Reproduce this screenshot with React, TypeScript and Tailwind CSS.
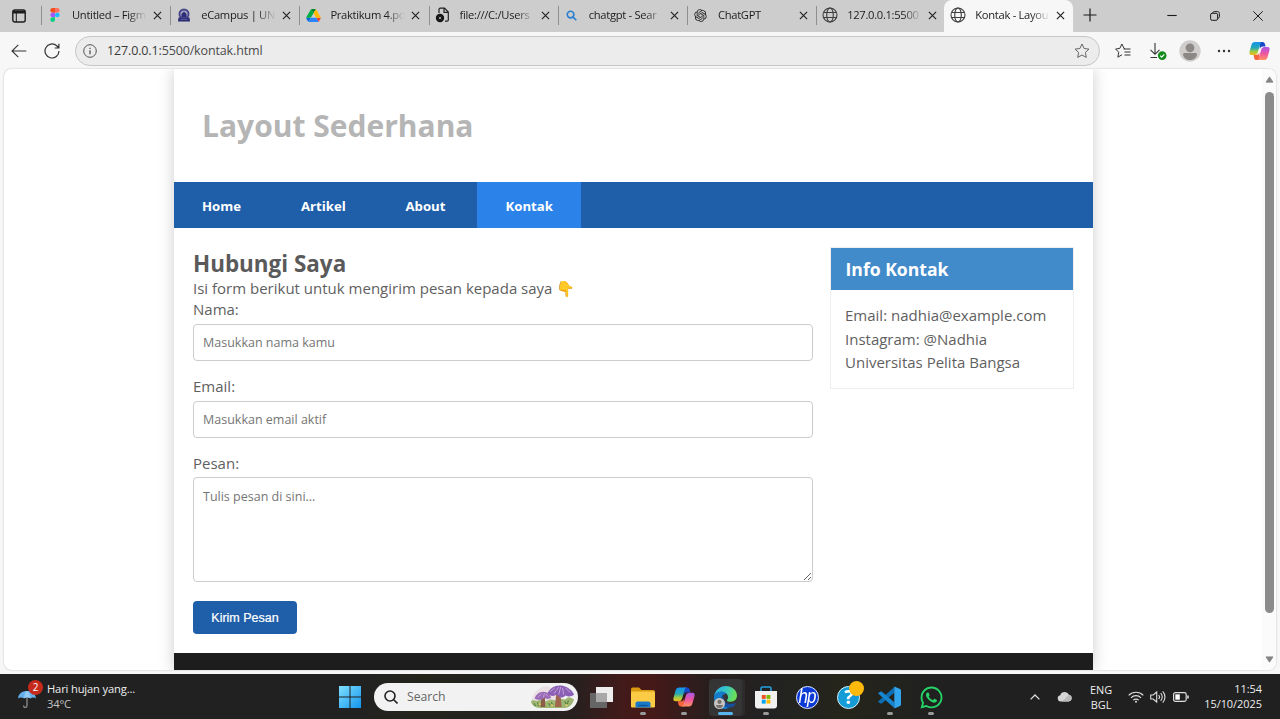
import React from "react";
import { FaWhatsapp } from "react-icons/fa";
import { RiOpenaiFill } from "react-icons/ri";

const sans = "font-['Open_Sans','Noto_Sans',sans-serif]";

function Globe({ className = "" }: { className?: string }) {
  return (
    <svg viewBox="0 0 16 16" className={`h-4 w-4 ${className}`} fill="none" stroke="#3f3f3f" strokeWidth="1.1">
      <circle cx="8" cy="8" r="7" />
      <ellipse cx="8" cy="8" rx="3.3" ry="7" />
      <path d="M1.6 5.5h12.8M1.6 10.5h12.8" />
    </svg>
  );
}

function FigmaIcon() {
  return (
    <svg viewBox="0 0 10 15" className="h-[14px] w-[10px]">
      <path d="M2.5 0H5v5H2.500a2.500 2.500 0 0 1 0-5z" fill="#f24e1e" />
      <path d="M5 0h2.500a2.500 2.500 0 0 1 0 5H5z" fill="#ff7262" />
      <path d="M2.500 5H5v5H2.500a2.500 2.500 0 0 1 0-5z" fill="#a259ff" />
      <circle cx="7.500" cy="7.500" r="2.500" fill="#1abcfe" />
      <path d="M2.500 10H5v2.500A2.500 2.500 0 1 1 2.500 10z" fill="#0acf83" />
    </svg>
  );
}

function CampusIcon() {
  return (
    <svg viewBox="0 0 14 14" className="h-[14px] w-[14px]">
      <circle cx="7" cy="6" r="5.500" fill="#45458a" />
      <circle cx="7" cy="6" r="3.600" fill="#aaa6c2" />
      <path d="M4.500 6 7 3.500 9.500 6V9h-5z" fill="#2d2d78" />
      <path d="M1.500 9.500h11l.5 4H1z" fill="#2b2b78" />
      <path d="M3.500 11.300h7" stroke="#8584b0" strokeWidth=".6" />
    </svg>
  );
}

function DriveIcon() {
  return (
    <svg viewBox="0 0 87.300 78" className="h-[13px] w-[15px]">
      <path d="m6.600 66.850 3.850 6.650c.8 1.400 1.950 2.500 3.300 3.300l13.750-23.800H0c0 1.550.4 3.100 1.200 4.500z" fill="#0066da" />
      <path d="M43.650 25 29.900 1.200c-1.350.8-2.500 1.900-3.300 3.300L1.200 48.500A9 9 0 0 0 0 53h27.500z" fill="#00ac47" />
      <path d="M73.550 76.800c1.350-.8 2.500-1.900 3.300-3.300l9.250-16c.8-1.400 1.200-2.950 1.200-4.500H59.800l5.850 11.500z" fill="#ea4335" />
      <path d="M43.650 25 57.400 1.200C56.050.4 54.500 0 52.900 0H34.400c-1.600 0-3.150.45-4.500 1.200z" fill="#00832d" />
      <path d="M59.800 53H27.500L13.750 76.800c1.350.8 2.900 1.200 4.500 1.200h50.800c1.600 0 3.150-.45 4.500-1.200z" fill="#2684fc" />
      <path d="m73.400 26.500-12.700-22c-.8-1.400-1.950-2.500-3.300-3.300L43.650 25 59.800 53h27.450c0-1.550-.4-3.100-1.200-4.500z" fill="#ffba00" />
    </svg>
  );
}

function FileIcon() {
  return (
    <svg viewBox="0 0 16 16" className="h-4 w-4" fill="none">
      <path d="M4 6V2.500A1.200 1.200 0 0 1 5.200 1.200H9.500l3.800 3.800V13a1.200 1.200 0 0 1-1.200 1.200H10M9 1.200V5.400h4.200" stroke="#222" strokeWidth="1.200" />
      <circle cx="5" cy="11" r="4.200" fill="#151515" />
      <path d="m3.800 9.800 2.400 2.400m0-2.400-2.400 2.400" stroke="#bbb" strokeWidth=".8" />
    </svg>
  );
}

function Close() {
  return (
    <svg viewBox="0 0 10 10" className="h-[9px] w-[9px] shrink-0" stroke="#222" strokeWidth="1.300">
      <path d="m1 1 8 8M9 1 1 9" />
    </svg>
  );
}

function Tab({ icon, title, active }: { icon: React.ReactNode; title: string; active?: boolean }) {
  return (
    <div className={`flex h-8 shrink-0 items-center pb-[2px] ${active ? "-ml-[1px] w-[129px] rounded-t-lg bg-[#f7f7f7]" : "w-[129.200px]"}`}>
      <span className={`h-[19px] w-px ${active ? "" : "bg-[#8f8f8f]"}`} />
      <span className="ml-[5px] flex w-4 shrink-0 justify-center">{icon}</span>
      <span className="ml-[9px] w-[76px] overflow-hidden whitespace-nowrap text-[11.200px] tracking-[-0.300px] text-[#1c1c1c] [mask-image:linear-gradient(to_right,black_74%,transparent_98%)]">
        {title}
      </span>
      <span className="ml-[5px] flex">
        <Close />
      </span>
    </div>
  );
}

function Copilot({ className }: { className: string }) {
  return (
    <svg viewBox="0 0 22 20" className={className}>
      <defs>
        <linearGradient id="cpL" x1="0" y1="0" x2="0" y2="1">
          <stop offset="0" stopColor="#1693ef" />
          <stop offset=".45" stopColor="#24a9b4" />
          <stop offset=".75" stopColor="#a9cd3b" />
          <stop offset="1" stopColor="#f4b91f" />
        </linearGradient>
        <linearGradient id="cpR" x1="0" y1="0" x2="0" y2="1">
          <stop offset="0" stopColor="#a957e9" />
          <stop offset=".5" stopColor="#ee55a1" />
          <stop offset="1" stopColor="#ff9360" />
        </linearGradient>
      </defs>
      <path d="M11 .5h3.200c1.300 0 2 .8 2.400 2l.8 2.700h-3.100c-1.700 0-2.500 1-3 2.600z" fill="#1748c9" />
      <path d="M6.300.5h7.200c-1 .3-1.500 1.200-1.900 2.500L9.300 11c-.5 2-1.500 3.300-3.600 3.300H2.600C.5 14.300 0 12.600.6 10.500l2-7C3.200 1.500 4.200.5 6.300.5z" fill="url(#cpL)" />
      <path d="M4.800 14.300h3c1.700 0 2.600-1 3-2.600l.2 7.800H7.900c-1.400 0-2-.8-2.400-2z" fill="#f4653d" />
      <path d="M15.700 19.500H8.500c1-.3 1.500-1.200 1.900-2.500l2.300-8c.5-2 1.500-3.300 3.600-3.300h3.100c2.100 0 2.600 1.700 2 3.800l-2 7c-.6 2-1.600 3-3.700 3z" fill="url(#cpR)" />
    </svg>
  );
}

function BrowserChrome() {
  return (
    <>
      <div className="flex h-8 items-center bg-[#cdcdcd]">
        <div className="flex w-[41px] shrink-0 justify-center pb-[1px] pr-[3px]">
          <svg viewBox="0 0 14 14" className="h-[14px] w-[14px]" fill="none" stroke="#1d1d1d" strokeWidth="1.400">
            <rect x=".8" y="1" width="12.400" height="12" rx="2" />
            <path d="M1 3.200h12" strokeWidth="2.600" />
            <path d="M4.300 4v9" strokeWidth="1" />
          </svg>
        </div>
        <Tab icon={<FigmaIcon />} title="Untitled – Figm" />
        <Tab icon={<CampusIcon />} title="eCampus | UNI" />
        <Tab icon={<DriveIcon />} title="Praktikum 4.pd" />
        <Tab icon={<FileIcon />} title="file:///C:/Users" />
        <Tab
          icon={
            <svg viewBox="0 0 12 12" className="h-[11px] w-[11px]" fill="none" stroke="#2a7fd0" strokeWidth="1.800">
              <circle cx="5" cy="5" r="3.600" />
              <path d="m7.500 7.500 3.700 3.700" />
            </svg>
          }
          title="chatgpt - Sear"
        />
        <Tab icon={<RiOpenaiFill className="h-[15px] w-[15px] text-[#222]" />} title="ChatGPT" />
        <Tab icon={<Globe />} title="127.0.0.1:5500" />
        <Tab icon={<Globe />} title="Kontak - Layou" active />
        <div className="flex flex-1 items-center text-[#1b1b1b]">
          <svg viewBox="0 0 14 14" className="ml-[10px] h-[14px] w-[14px] -translate-y-px" stroke="currentColor" strokeWidth="1.200">
            <path d="M7 .5v13M.5 7h13" />
          </svg>
          <svg viewBox="0 0 10 10" className="ml-[70px] h-[10px] w-[10px]" stroke="currentColor" strokeWidth="1.100">
            <path d="M.3 4.500h9.400" />
          </svg>
          <svg viewBox="0 0 10 10" className="ml-[33px] h-[10px] w-[10px]" stroke="currentColor" fill="none">
            <rect x=".6" y="2.300" width="7" height="7" rx="1.500" />
            <path d="M2.800 2.200C2.800 1 3.400.6 4.300.6h3.200c1.200 0 1.900.8 1.900 1.900v3.200c0 1-.5 1.500-1.600 1.500" />
          </svg>
          <svg viewBox="0 0 10 10" className="ml-[33px] h-[10px] w-[10px]" stroke="currentColor">
            <path d="m.3.3 9.400 9.400M9.700.3.300 9.700" />
          </svg>
        </div>
      </div>
      <div className="flex h-[37px] items-center bg-[#f7f7f7]">
        <svg viewBox="0 0 16 14" className="ml-[11px] h-[14px] w-4" fill="none" stroke="#333" strokeWidth="1.100">
          <path d="M15.300 7H1M7.300.8 1 7l6.300 6.200" />
        </svg>
        <svg viewBox="0 0 16 16" className="ml-[17px] h-4 w-4" fill="none" stroke="#333" strokeWidth="1.200">
          <path d="M15 8a7 7 0 1 1-2.300-5.200L14.800 5M14.900.8V5h-4.200" />
        </svg>
        <div className="ml-[15px] flex h-[30px] w-[1025px] items-center rounded-full border border-[#c6c6c6] bg-[#ececec] pl-[7px] pr-[9px]">
          <svg viewBox="0 0 14 14" className="h-[14px] w-[14px]" fill="none" stroke="#555">
            <circle cx="7" cy="7" r="6.300" />
            <path d="M7 6.300v4M7 3.700V5" strokeWidth="1.300" />
          </svg>
          <span className="ml-[10px] flex-1 pt-px text-[12.500px] tracking-[-0.140px] text-[#4a4a4a]">
            <span className="text-[#3a3a3a]">127.0.0.1</span>:5500/kontak.html
          </span>
          <svg viewBox="0 0 16 16" className="h-4 w-4" fill="none" stroke="#666" strokeLinejoin="round">
            <path d="m8 1 2.100 4.500 4.900.6-3.600 3.400.9 4.900L8 12l-4.300 2.400.9-4.900L1 6.100l4.900-.6z" />
          </svg>
        </div>
        <svg viewBox="0 0 16 16" className="ml-[15px] h-4 w-4" fill="none" stroke="#333" strokeLinejoin="round">
          <path d="M9.800 5.500 9 5.400 6.900 1 4.800 5.400.6 6l3.100 3.200-.8 5L7 11.700M8.500 6h7M9.500 9h6M9.500 12h6" />
        </svg>
        <svg viewBox="0 0 18 18" className="ml-[18px] h-[18px] w-[18px]" fill="none" stroke="#333" strokeWidth="1.100">
          <path d="M6 1v11M1.500 7.800 6 12.300l4.500-4.500M1.500 15.500h6.500" />
          <circle cx="13.200" cy="13.600" r="4.300" fill="#138a1c" stroke="none" />
          <path d="m11.200 13.600 1.500 1.500 2.600-2.800" stroke="#fff" />
        </svg>
        <svg viewBox="0 0 22 22" className="ml-[12px] h-[22px] w-[22px]">
          <circle cx="11" cy="11" r="10.700" fill="#d0cecd" />
          <circle cx="11" cy="7.800" r="4.400" fill="#8b8886" />
          <path d="M4 14.500c0-1 .8-1.500 1.600-1.500h10.800c.8 0 1.600.5 1.600 1.500C17.500 18 14.500 20 11 20s-6.500-2-7-5.500z" fill="#8b8886" />
        </svg>
        <svg viewBox="0 0 14 4" className="ml-[16px] h-1 w-[14px]" fill="#333">
          <circle cx="2" cy="2" r="1.200" />
          <circle cx="7" cy="2" r="1.200" />
          <circle cx="12" cy="2" r="1.200" />
        </svg>
        <Copilot className="ml-[18px] h-5 w-[21px]" />
      </div>
    </>
  );
}

function Field({ label, placeholder }: { label: string; placeholder: string }) {
  return (
    <div className="mb-[15px]">
      <label className="block h-[25px] leading-[20px]">{label}</label>
      <input
        placeholder={placeholder}
        className="block h-[37px] w-full rounded-[4px] border border-[#ccc] bg-white px-[9px] text-[12.500px] placeholder:text-[#757575]"
      />
    </div>
  );
}

function WebPage() {
  return (
    <div className="mx-1 flex h-[601px] overflow-hidden rounded-lg bg-white shadow-[0_0_2px_rgba(0,0,0,0.25)]">
      <div className="ml-[170px] flex w-[919px] shrink-0 flex-col bg-white text-[15px] text-[#5f5f5f] shadow-[0_0_15px_rgba(0,0,0,0.2)]">
        <header className="flex h-[113px] shrink-0 items-center pl-7">
          <h1 className="text-[30px] font-bold text-[#b5b5b5]">Layout Sederhana</h1>
        </header>
        <nav className="flex h-[46px] shrink-0 bg-[#1f5faa] text-[13.200px] font-bold leading-[48px] text-white">
          <a className="w-[99px] pl-7">Home</a>
          <a className="w-[104px] pl-7">Artikel</a>
          <a className="w-[100px] pl-[28.500px]">About</a>
          <a className="h-[46px] w-[104px] bg-[#2b83ea] pl-[28.500px]">Kontak</a>
        </nav>
        <div className="flex h-[425px] shrink-0 items-start pl-[19px] pt-[19px]">
          <main className="w-[620px]">
            <h2 className="h-[31px] text-[22.450px] font-bold leading-[33px] text-[#5a5a5a]">Hubungi Saya</h2>
            <p className="h-[21px] leading-[20px]">Isi form berikut untuk mengirim pesan kepada saya 👇</p>
            <Field label="Nama:" placeholder="Masukkan nama kamu" />
            <Field label="Email:" placeholder="Masukkan email aktif" />
            <label className="block h-[24px] leading-[20px]">Pesan:</label>
            <textarea
              placeholder="Tulis pesan di sini..."
              className="block h-[105px] w-full resize rounded-[4px] border border-[#ccc] bg-white px-[9px] py-[10px] text-[12.500px] leading-[18px] placeholder:text-[#757575]"
            />
            <button className="mt-[19px] block h-[33px] w-[104px] rounded-[4px] bg-[#1f5faa] pt-px font-['Liberation_Sans',sans-serif] text-[12.500px] text-white [-webkit-text-stroke:0.200px_white]">
              Kirim Pesan
            </button>
          </main>
          <aside className="ml-[17px] h-[142px] w-[244px] border border-[#eee]">
            <h3 className="h-[42px] bg-[#428bca] pl-[14.500px] text-[17.600px] font-bold leading-[43px] text-white">Info Kontak</h3>
            <div className="pl-[14px] pt-[14px] leading-[23.600px]">
              <p>Email: nadhia@example.com</p>
              <p>Instagram: @Nadhia</p>
              <p>Universitas Pelita Bangsa</p>
            </div>
          </aside>
        </div>
        <footer className="flex-1 bg-[#1d1d1d]" />
      </div>
      <div className="flex-1" />
      <div className="flex w-[14px] flex-col items-center bg-[#fbfbfb]">
        <svg viewBox="0 0 10 8" className="mt-[7px] h-[7px] w-[9px] shrink-0" fill="#858585" stroke="#858585" strokeLinejoin="round">
          <path d="M5 1 9 7H1z" />
        </svg>
        <div className="mt-[9px] h-[521px] w-[9px] shrink-0 rounded-full bg-[#8b8b8b]" />
        <svg viewBox="0 0 10 8" className="mt-[43px] h-[7px] w-[9px] shrink-0" fill="#858585" stroke="#858585" strokeLinejoin="round">
          <path d="M5 7 1 1h8z" />
        </svg>
      </div>
    </div>
  );
}

function TaskItem({ children, mark = "none" }: { children: React.ReactNode; mark?: "none" | "open" | "active" }) {
  return (
    <div className="flex w-[41.200px] shrink-0 flex-col items-center">
      <div className={`flex h-[37px] items-center justify-center ${mark === "active" ? "w-[33px] rounded-[4px] bg-[#353535] shadow-[3px_0_0_#2c2c2c]" : "w-[36px]"}`}>
        {children}
      </div>
      <span
        className={`-mt-[4px] h-[3px] rounded-full ${
          mark === "active" ? "w-[15px] bg-[#58b7ee]" : mark === "open" ? "w-[6px] bg-[#9a9a9a]" : "w-[6px]"
        }`}
      />
    </div>
  );
}

function Mushrooms() {
  return (
    <svg viewBox="0 0 46 26" className="h-[25px] w-[46px]">
      <path d="M1 16c2-8 8-13 15-14l13 5-4 14H5z" fill="#e9dfe4" />
      <path d="M0 18c3-3 5 1 8-1s6 3 10 0 6 2 10-1 6 2 9-1 5 0 8 1c-2 6-6 9-11 9H10C4 25 1 22 0 18z" fill="#9fb574" />
      <path d="M26.500 9h4l1.500 15h-7z" fill="#a0664d" />
      <path d="M11 13h3.500l.5 11h-5z" fill="#8d5c49" />
      <path d="M17 10C20 4 25 1 31 1.500S43 6 45 11c-2 2-6 3-9 1-3 3-7 3-9-1-3 2-7 2-10-1z" fill="#8b5fb5" />
      <path d="M4 15c1-4 5-7 9-7s7 3 8 6c-2 2-5 2-7 0-2 3-7 3-10 1z" fill="#9a69b5" />
      <path d="m20 8 5-4m-1 6 5-7m0 8 2-8m3 8-1-7m8 5-5-5M7 14l4-4m2 4 1-4m4 3-3-3" stroke="#d3b4e4" strokeWidth=".8" />
      <path d="m3 20 2 3m2-4 1 4m10-4 2 4m1-4 2 3m12-4 2 3m2-4-1 4" stroke="#58833f" strokeWidth="1.200" />
      <path d="M8 21h2m11 1h2m13 0h2m-20-3h1" stroke="#f0cf65" strokeWidth="1.500" />
    </svg>
  );
}

function Taskbar() {
  return (
    <div className="mt-1 flex h-[45px] items-center bg-[linear-gradient(to_right,#212121_0,#212121_28%,#25241b_33%,#222220_40%,#28201f_45%,#441a19_49%,#451918_51%,#2a1e1d_55%,#222_60%,#25251b_66%,#202020_73%)] text-[#eee]">
      <div className="ml-[17px] flex w-[319px] shrink-0 items-center">
        <div className="relative -mt-[3px] h-[30px] w-[26px]">
          <svg viewBox="0 0 20 20" className="mt-[9px] h-[20px] w-[20px]" fill="none">
            <path d="M10 9v7.500c0 2.500-3.500 2.500-3.500 0" stroke="#8e8e8e" strokeWidth="1.300" />
            <path d="M1 9.500C1.500 4.500 5 2 10 2s8.500 2.500 9 7.500c-1.500-1.200-4-1.200-5.500 0-1.500-1.200-5-1.200-6.500 0-1.500-1.200-4.500-1.200-6 0z" fill="#65afeb" />
            <path d="M7 9.500C7.500 5 8.500 2.500 10 2c2 .5 3 3 3.500 7.500-1.500-1.200-5-1.200-6.500 0z" fill="#94ccf6" />
          </svg>
          <span className="absolute left-[11px] top-0 flex h-[15px] w-[15px] items-center justify-center rounded-full bg-[#c42b1c] text-[10px] text-white">
            2
          </span>
        </div>
        <div className="-mt-[2px] ml-[4px] text-[11.200px] leading-[15px] tracking-[-0.160px]">
          <div>Hari hujan yang...</div>
          <div className="text-[#c4c4c4]">34°C</div>
        </div>
      </div>
      <svg viewBox="0 0 22 22" className="ml-[3px] h-[22px] w-[22px] shrink-0">
        <defs>
          <linearGradient id="win" x1="0" y1="0" x2="1" y2="1">
            <stop offset="0" stopColor="#7fe0ff" />
            <stop offset="1" stopColor="#1495ee" />
          </linearGradient>
        </defs>
        <path d="M0 0h10.500v10.500H0zM11.500 0H22v10.500H11.500zM0 11.500h10.500V22H0zM11.500 11.500H22V22H11.500z" fill="url(#win)" />
      </svg>
      <div className="ml-[13px] flex h-[28px] w-[204px] shrink-0 items-center rounded-full bg-[#f2f2f2] pl-[10px] pr-[2px]">
        <svg viewBox="0 0 14 14" className="h-[14px] w-[14px]" fill="none" stroke="#222" strokeWidth="1.600">
          <circle cx="6" cy="6" r="5" />
          <path d="m9.700 9.700 3.800 3.800" />
        </svg>
        <span className="ml-[9px] flex-1 pt-px text-[12.200px] text-[#666]">Search</span>
        <Mushrooms />
      </div>
      <div className="ml-[3px] flex">
        <TaskItem>
          <svg viewBox="0 0 23 21" className="h-[21px] w-[23px]">
            <rect x="6" y="0" width="17" height="15" fill="#ededed" />
            <rect x="0" y="6" width="17" height="15" fill="#666" />
            <rect x="6" y="6" width="11" height="9" fill="#a8a8a8" />
          </svg>
        </TaskItem>
        <TaskItem mark="open">
          <svg viewBox="0 0 24 21" className="h-[21px] w-[24px]">
            <path d="M0 2a1.500 1.500 0 0 1 1.500-1.500H8L10.500 3H22a2 2 0 0 1 2 2v5H0z" fill="#d99a12" />
            <rect x="0" y="4.500" width="24" height="16" rx="1.200" fill="#fccb46" />
            <path d="M4.500 20.500v-4a2 2 0 0 1 2-2h11a2 2 0 0 1 2 2v4z" fill="#1879c9" />
            <path d="M7.500 18.500h9" stroke="#0b559c" strokeWidth="1.300" />
          </svg>
        </TaskItem>
        <TaskItem mark="open">
          <Copilot className="h-[20px] w-[22px]" />
        </TaskItem>
        <TaskItem mark="active">
          <div className="relative h-[23px] w-[23px]">
            <svg viewBox="0 0 24 24" className="h-[23px] w-[23px]">
              <defs>
                <linearGradient id="edgeA" x1="0" y1="0" x2="1" y2=".25">
                  <stop offset="0" stopColor="#2aa9e8" />
                  <stop offset=".55" stopColor="#36c7c6" />
                  <stop offset="1" stopColor="#6ade58" />
                </linearGradient>
              </defs>
              <path d="M0 11C1 4.500 6 0 12.300 0 19 0 24 4.700 24 10c0 4-3 6.500-6.500 6.500-2.500 0-4-.8-4-1.500 0-.5 1.200-1.200 1.200-3.200C14.700 8.500 11.500 6 8 6c-4 0-7 2.500-8 5z" fill="url(#edgeA)" />
              <path d="M0 11c1-3 4-5 8-5 2 0 4 .8 5.200 2C9.500 8 7.500 10.500 7.500 14c0 5 4 8.500 9 8.300-1.300.8-2.900 1.700-5 1.700C5 24 0 18.500 0 12z" fill="#127dcd" />
              <path d="M9.500 9.800C8.300 11 7.500 12.500 7.500 14.500c0 4.500 3.500 8 8.500 8 3 0 5.500-1.700 6.700-4.200.2-.5-.2-.8-.6-.6-5 2.500-10.600.6-11.600-3.200-.5-1.700-.5-3.200-1-4.700z" fill="#164f9f" />
            </svg>
            <svg viewBox="0 0 12 12" className="absolute bottom-0 left-0 h-[11px] w-[11px]">
              <circle cx="6" cy="6" r="6" fill="#c9c5c2" />
              <circle cx="6" cy="4.300" r="2.300" fill="#77716d" />
              <path d="M2.200 7.500h7.600c0 2-1.700 3.500-3.800 3.500S2.200 9.500 2.200 7.500z" fill="#77716d" />
            </svg>
          </div>
        </TaskItem>
        <TaskItem mark="open">
          <svg viewBox="0 0 22 23" className="h-[23px] w-[22px]">
            <path d="M6 6V2.500A1.500 1.500 0 0 1 7.500 1h7A1.500 1.500 0 0 1 16 2.500V6" fill="none" stroke="#22a2e4" strokeWidth="1.500" />
            <path d="M0 5h22v14.500a3 3 0 0 1-3 3H3a3 3 0 0 1-3-3z" fill="#f1f1f1" />
            <path d="M6.800 9h3.900v3.900H6.800z" fill="#f25022" />
            <path d="M11.500 9h3.900v3.900h-3.900z" fill="#7fba00" />
            <path d="M6.800 13.700h3.900v3.900H6.800z" fill="#00a4ef" />
            <path d="M11.500 13.700h3.900v3.900h-3.900z" fill="#ffb900" />
          </svg>
        </TaskItem>
        <TaskItem>
          <span className="flex h-[23px] w-[23px] items-center justify-center rounded-full border border-[#e4eaff] bg-[#0b39d5] pb-[3px] font-['Liberation_Sans',sans-serif] text-white">
            <span className="scale-x-[0.850] text-[20px] italic leading-none tracking-[-1px]">hp</span>
          </span>
        </TaskItem>
        <TaskItem>
          <span className="relative flex h-[23px] w-[23px] items-center justify-center rounded-full border-[1.500px] border-[#dbf2fc] bg-[#159bd5] text-[19px] font-bold leading-none text-white">
            ?
            <span className="absolute -right-[5px] -top-[6px] h-[15px] w-[15px] rounded-full bg-[#ffb90b]" />
          </span>
        </TaskItem>
        <TaskItem mark="open">
          <svg viewBox="0 0 24 24" className="h-[23px] w-[23px]">
            <path d="M17 1v6L3.500 18.500.9 17.200a1 1 0 0 1-.2-1.600z" fill="#0c6fb5" />
            <path d="M17 23v-6L3.500 5.500.9 6.800a1 1 0 0 0-.2 1.600z" fill="#1786d0" />
            <path d="M17 .5 23 3.200a1.500 1.500 0 0 1 1 1.300v15a1.500 1.500 0 0 1-1 1.300l-6 2.700z" fill="#31a5ee" />
          </svg>
        </TaskItem>
        <TaskItem mark="open">
          <FaWhatsapp className="h-[25px] w-[25px] text-[#25d366]" />
        </TaskItem>
      </div>
      <div className="flex flex-1 items-center justify-end pr-[17px] text-[10.900px] leading-[15px]">
        <svg viewBox="0 0 10 6" className="h-[6px] w-[10px]" fill="none" stroke="#ddd" strokeWidth="1.300">
          <path d="m.6 5.400 4.400-4.400 4.400 4.400" />
        </svg>
        <svg viewBox="0 0 15 11" className="ml-[17px] h-[11px] w-[15px]">
          <path d="M3.500 10.500a3.200 3.200 0 0 1-.3-6.300A4.800 4.800 0 0 1 12 3.800a3.400 3.400 0 0 1-.4 6.700z" fill="#d5d5d5" />
          <path d="M5 10.500 12 3.800a3.400 3.400 0 0 1-.4 6.700z" fill="#b9b9b9" />
        </svg>
        <div className="ml-[17px] w-[24px] text-center">
          <div>ENG</div>
          <div>BGL</div>
        </div>
        <svg viewBox="0 0 16 12" className="ml-[15px] h-[12px] w-4" fill="none" stroke="#ddd" strokeWidth="1.200">
          <path d="M.7 4.300a10.300 10.300 0 0 1 14.600 0M3 6.800a7 7 0 0 1 10 0M5.300 9.200a3.800 3.800 0 0 1 5.400 0" />
          <circle cx="8" cy="10.700" r="1" fill="#ddd" stroke="none" />
        </svg>
        <svg viewBox="0 0 16 14" className="ml-[6px] h-[14px] w-4" fill="none" stroke="#ddd" strokeWidth="1.100">
          <path d="M.7 5v4h2.500L6.700 12V2L3.200 5zM8.700 5a3 3 0 0 1 0 4M10.700 3.200a5.500 5.500 0 0 1 0 7.600M12.700 1.300a8.300 8.300 0 0 1 0 11.400" />
        </svg>
        <svg viewBox="0 0 16 10" className="ml-[7px] h-[10px] w-4" fill="none" stroke="#ddd" strokeWidth="1.200">
          <rect x=".6" y=".6" width="12.600" height="8.800" rx="1.800" />
          <path d="M15 3.500v3" strokeWidth="1.600" />
          <rect x="2.300" y="2.300" width="4.500" height="5.400" fill="#fff" stroke="none" />
        </svg>
        <div className="-mt-[1px] ml-[14px] w-[60px] whitespace-nowrap pr-px text-right">
          <div>11:54</div>
          <div>15/10/2025</div>
        </div>
      </div>
    </div>
  );
}

export default function App() {
  return (
    <div className={`h-[719px] w-[1280px] overflow-hidden bg-[#f7f7f7] ${sans}`}>
      <BrowserChrome />
      <WebPage />
      <Taskbar />
    </div>
  );
}
